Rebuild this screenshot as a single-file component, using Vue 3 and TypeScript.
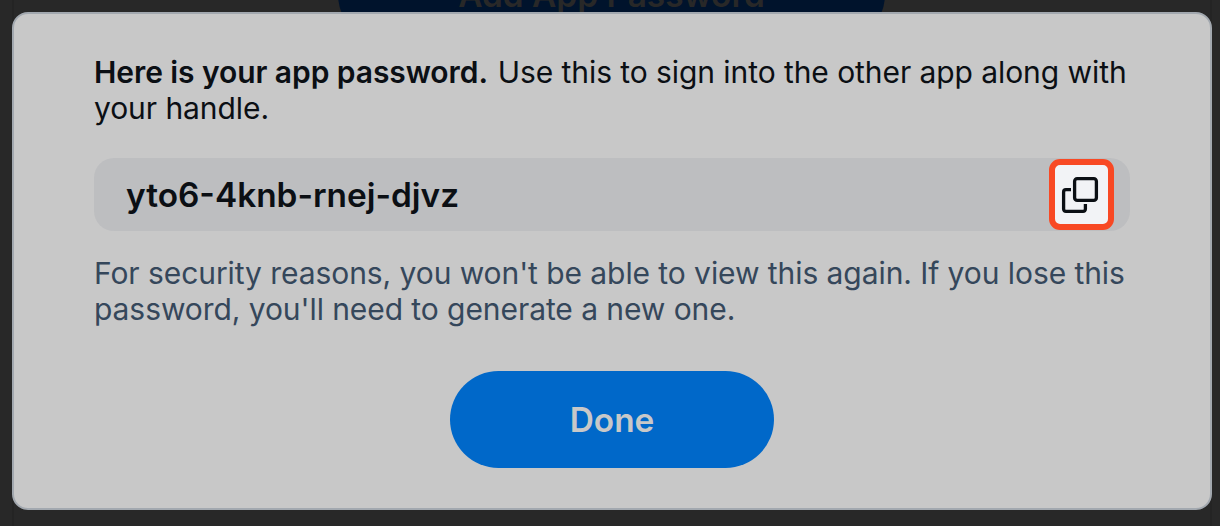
<script setup lang="ts">
const password: string = 'yto6-4knb-rnej-djvz'
</script>

<template>
  <div class="page">
    <div class="behind">Add App Password</div>
    <main class="dialog">
      <p class="intro"><strong>Here is your app password.</strong> Use this to sign into the other app along with<br />your handle.</p>
      <div class="field">
        <span class="code">{{ password }}</span>
        <button class="copy" aria-label="Copy">
          <svg width="40" height="40" viewBox="0 0 40 40" fill="none" stroke="#0b0f14" stroke-width="3.3" stroke-linejoin="round">
            <rect x="13.6" y="4.6" width="21.8" height="21.8" rx="2.6" />
            <path d="M10 15.6H4.9a2.3 2.3 0 0 0-2.3 2.3v17.2a2.3 2.3 0 0 0 2.3 2.3h17.2a2.3 2.3 0 0 0 2.3-2.3V30" />
          </svg>
        </button>
      </div>
      <p class="note">For security reasons, you won't be able to view this again. If you lose this<br />password, you'll need to generate a new one.</p>
      <button class="done">Done</button>
    </main>
  </div>
</template>

<style>
body { margin: 0; overflow: hidden; }
</style>

<style scoped>
.page { position: relative; box-sizing: border-box; width: 1220px; height: 526px; padding: 12px 8px 16px 12px; background: linear-gradient(90deg, transparent 12px, #242424 12px, #242424 14px, transparent 14px, transparent 1210px, #242424 1210px, #242424 1212px, transparent 1212px), #282828; font-family: Inter, sans-serif; overflow: hidden; }
.behind { position: absolute; left: 338px; top: -54px; width: 547px; height: 97px; border-radius: 49px; background: #00132c; color: #282828; font-size: 33.4px; font-weight: 600; line-height: 99px; text-align: center; }
.dialog { position: relative; box-sizing: border-box; width: 1200px; height: 498px; padding: 40px 80px 0; border: 2px solid #a2a8af; border-radius: 16px; background: #c8c8c8; display: flex; flex-direction: column; }
p { margin: 0; font-size: 30px; line-height: 36px; white-space: nowrap; letter-spacing: -0.07px; }
.intro { color: #0b0f14; }
strong { font-weight: 600; margin-right: 1.5px; }
.field { display: flex; align-items: center; justify-content: space-between; box-sizing: border-box; height: 73px; margin-top: 32px; padding: 0 16px 0 32px; border-radius: 20px; background: #bdbec0; }
.code { font-size: 33.4px; font-weight: 600; color: #0b0f14; }
.copy { box-sizing: border-box; width: 65px; height: 71px; padding: 0 1px 1px 0; border: 6px solid #f84924; border-radius: 11px; background: #f2f3f6; display: grid; place-items: center; }
.note { margin-top: 24px; color: #35475b; }
.done { align-self: center; width: 324px; height: 97px; margin-top: 44px; padding: 0; border: 0; border-radius: 49px; background: #0068c9; color: #c8c8c8; font: 600 33.4px Inter, sans-serif; }
</style>
